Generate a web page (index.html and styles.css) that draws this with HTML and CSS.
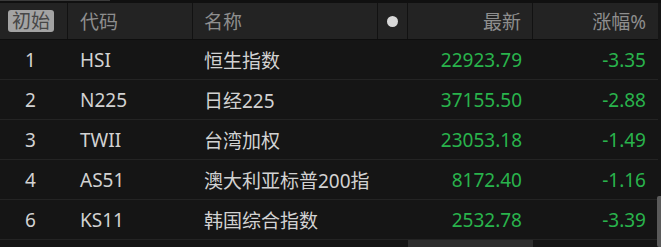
FILE: index.html
```html
<!DOCTYPE html>
<html lang="zh">
<head>
<meta charset="utf-8">
<link rel="stylesheet" href="styles.css">
</head>
<body>
<div class="wrap">
  <div class="topbar"><div class="topline"></div></div>
  <div class="table">
    <div class="row head">
      <div class="c c1"><span class="badge">初始</span></div>
      <div class="c c2">代码</div>
      <div class="c c3">名称</div>
      <div class="c c4"><span class="dot"></span></div>
      <div class="c c5 r">最新</div>
      <div class="c c6 r">涨幅%</div>
    </div>
    <div class="row">
      <div class="c c1 num">1</div>
      <div class="c c2">HSI</div>
      <div class="c c3">恒生指数</div>
      <div class="c c4"></div>
      <div class="c c5 r g">22923.79</div>
      <div class="c c6 r g">-3.35</div>
    </div>
    <div class="row">
      <div class="c c1 num">2</div>
      <div class="c c2">N225</div>
      <div class="c c3">日经225</div>
      <div class="c c4"></div>
      <div class="c c5 r g">37155.50</div>
      <div class="c c6 r g">-2.88</div>
    </div>
    <div class="row">
      <div class="c c1 num">3</div>
      <div class="c c2">TWII</div>
      <div class="c c3">台湾加权</div>
      <div class="c c4"></div>
      <div class="c c5 r g">23053.18</div>
      <div class="c c6 r g">-1.49</div>
    </div>
    <div class="row">
      <div class="c c1 num">4</div>
      <div class="c c2">AS51</div>
      <div class="c c3">澳大利亚标普200指</div>
      <div class="c c4"></div>
      <div class="c c5 r g">8172.40</div>
      <div class="c c6 r g">-1.16</div>
    </div>
    <div class="row">
      <div class="c c1 num">6</div>
      <div class="c c2">KS11</div>
      <div class="c c3">韩国综合指数</div>
      <div class="c c4"></div>
      <div class="c c5 r g">2532.78</div>
      <div class="c c6 r g">-3.39</div>
    </div>
  </div>
  <div class="vscroll"></div>
  <div class="hscroll"></div>
</div>
</body>
</html>
```
FILE: styles.css
```css
html, body {
  margin: 0;
  padding: 0;
  background: #141414;
}
body {
  width: 661px;
  height: 247px;
  overflow: hidden;
  font-family: "Noto Sans", "Noto Sans CJK SC", sans-serif;
}
.wrap {
  position: relative;
  width: 661px;
  height: 247px;
  background: #151515;
}
.topbar {
  height: 3px;
  background: #101010;
}
.topline {
  width: 110px;
  height: 1px;
  background: #3a3a3a;
}
.table {
  width: 658px;
}
.row {
  display: flex;
  height: 39px;
  border-bottom: 1px solid #242424;
  color: #d2d2d2;
  font-size: 19px;
}
.row.head {
  height: 36px;
  background: #232323;
  border-bottom: 1px solid #0e0e0e;
  color: #8e8e8e;
}
.c {
  display: flex;
  align-items: center;
  box-sizing: border-box;
  white-space: nowrap;
}
.head .c {
  border-right: 1px solid #121212;
}
.head .c6 { border-right: none; }
.c1 { width: 68px; padding-left: 8px; }
.num { padding-left: 25px; }
.c2 { width: 125px; padding-left: 12px; }
.c3 { width: 185px; padding-left: 11px; }
.c4 { width: 30px; justify-content: center; }
.c5 { width: 125px; padding-right: 11px; }
.c6 { width: 125px; padding-right: 12px; }
.r { justify-content: flex-end; }
.g { color: #29b34c; }
.badge {
  display: inline-block;
  background: #a3a3a3;
  color: #474747;
  border-radius: 3px;
  padding: 0 4px;
  height: 22px;
  line-height: 22px;
  font-size: 19px;
}
.dot {
  width: 11px;
  height: 11px;
  border-radius: 50%;
  background: #d8d8d8;
}
.vscroll {
  position: absolute;
  right: 0;
  top: 196px;
  width: 4px;
  height: 51px;
  background: #5a5a5a;
  border-radius: 2px 0 0 2px;
}
.hscroll {
  position: absolute;
  left: 408px;
  top: 240px;
  width: 125px;
  height: 7px;
  background: #2e2e2e;
}
```
